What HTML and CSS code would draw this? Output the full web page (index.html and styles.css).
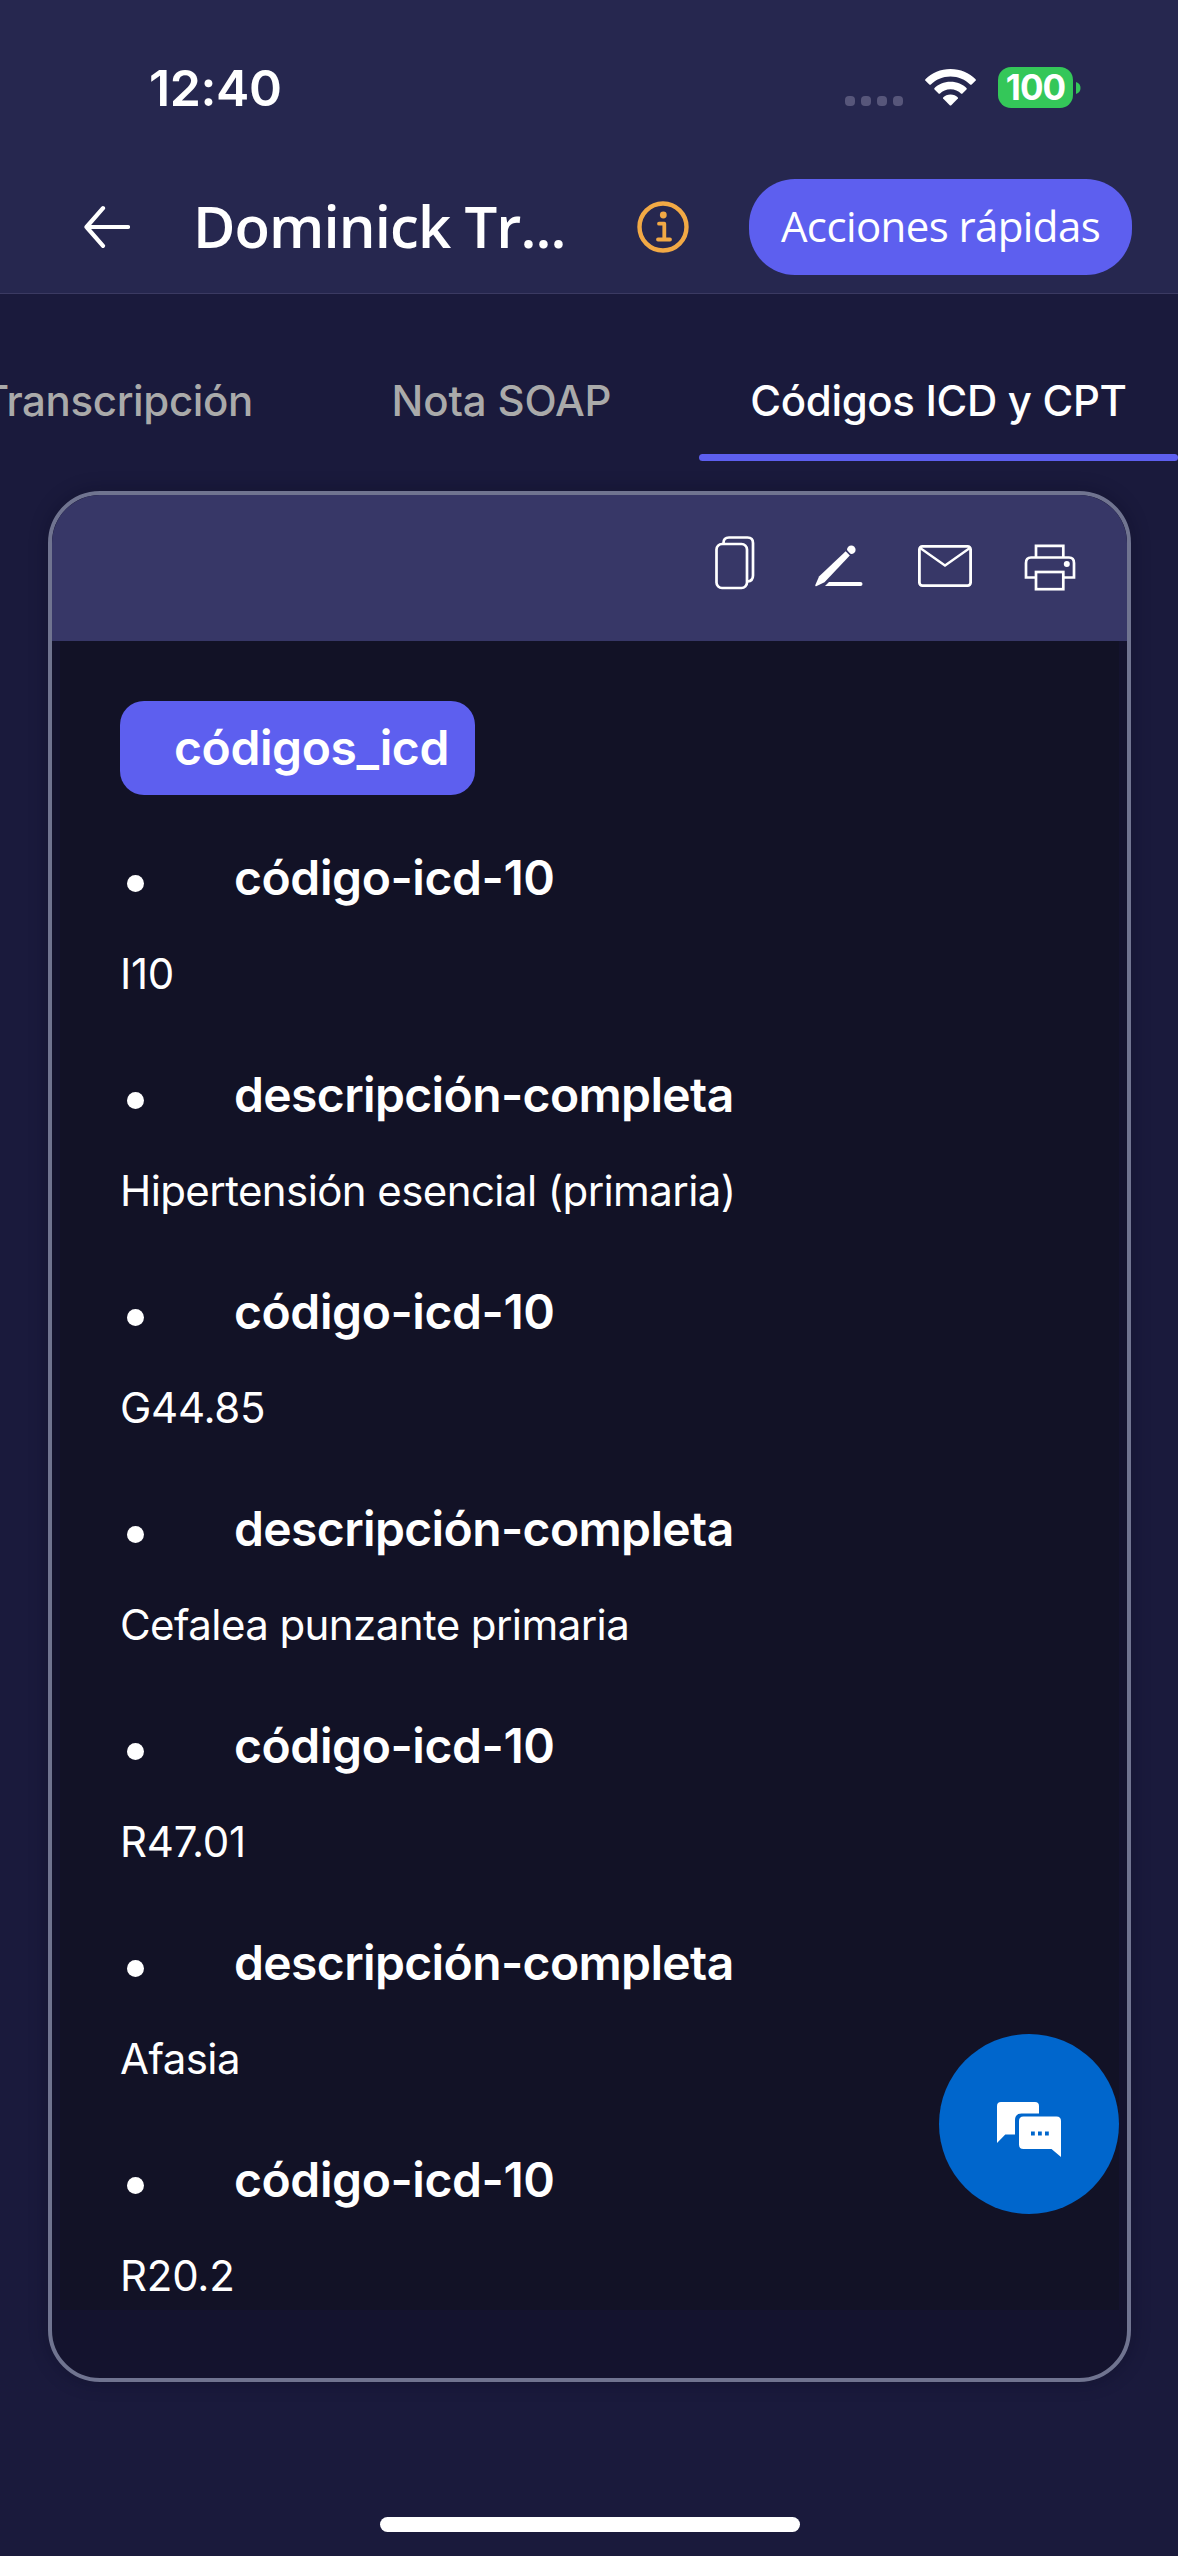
FILE: index.html
```html
<!DOCTYPE html>
<html lang="es">
<head>
<meta charset="utf-8">
<title>Códigos ICD y CPT</title>
<link rel="stylesheet" href="styles.css">
</head>
<body>
<div class="screen">
  <header class="top">
    <div class="status">
      <span class="time">12:40</span>
      <span class="signal"><i></i><i></i><i></i><i></i></span>
      <svg class="wifi" viewBox="0 0 51 37" width="51" height="37">
        <path fill="#fff" d="M25.5 0C35.4 0 44.4 3.800 50.600 10.200L51 11.200 46.400 15.800H45.400C40.200 10.500 33.200 7.500 25.500 7.500S10.800 10.500 5.600 15.800H4.600L0 11.200.4 10.200C6.600 3.800 15.600 0 25.500 0Z"/>
        <path fill="#fff" d="M25.500 12.800C32 12.800 37.800 15.300 41.700 19.300V20.300L37.200 24.800H36.200C33.400 22 29.700 20.300 25.500 20.300S17.600 22 14.800 24.800H13.800L9.300 20.300V19.300C13.200 15.300 19 12.800 25.500 12.800Z"/>
        <path fill="#fff" d="M25.500 25.500C28.500 25.500 31 26.600 32.900 28.500V29.500L26 36.500H25L18.100 29.500V28.500C20 26.600 22.500 25.500 25.500 25.500Z"/>
      </svg>
      <span class="battery"><span class="level">100</span><svg width="5" height="12" viewBox="0 0 5 12"><path fill="#34c759" d="M0 0C3 1 4.500 3 4.500 6S3 11 0 12Z"/></svg></span>
    </div>
    <div class="nav">
      <svg class="back" viewBox="0 0 46 44" width="46" height="44" fill="none" stroke="#fff" stroke-width="4.200" stroke-linecap="round" stroke-linejoin="round"><path d="M44 22H2.500M19 3.200L2.500 22L19 40.800"/></svg>
      <h1 class="title">Dominick Tr...</h1>
      <svg class="info" viewBox="0 0 52 52" width="52" height="52" fill="none" stroke="#f2a945">
        <circle cx="26" cy="26" r="23.500" stroke-width="4.400"/>
        <path d="M22 22.700H27.300V38.500M21 38.500H33" stroke-width="3.800" stroke-linecap="round" stroke-linejoin="round"/>
        <circle cx="26.300" cy="14" r="3.400" fill="#f2a945" stroke="none"/>
      </svg>
      <button class="quick"><span>Acciones rápidas</span></button>
    </div>
  </header>
  <nav class="tabs">
    <a class="tab tab-first"><span>Transcripción</span></a>
    <a class="tab tab-mid"><span>Nota SOAP</span></a>
    <a class="tab tab-on"><span>Códigos ICD y CPT</span></a>
  </nav>
  <main class="card">
    <div class="tools">
      <svg class="copy" viewBox="0 0 40 54" width="40" height="54" fill="none" stroke="#fff" stroke-width="2.700">
        <rect x="1.500" y="8" width="30.500" height="44" rx="5.500"/>
        <path d="M8.500 8V7Q8.500 1.500 14 1.500H32.500Q38 1.500 38 7V39.500Q38 45 32.500 45.500"/>
      </svg>
      <svg class="pen" viewBox="0 0 48 42" width="48" height="42" fill="#fff">
        <path d="M30.700 6.300L34.800 10.500L9.500 37.200L1.200 41.200Q0 41.500.3 40L4 31.500Z"/>
        <circle cx="36.300" cy="4.800" r="4.300"/>
        <path d="M31.200 5.200L35.200 9.400" stroke="#373767" stroke-width="1.200"/>
        <path d="M14 37H45.500Q47.500 37.200 47.500 39T45.500 41H10Z"/>
      </svg>
      <svg class="mail" viewBox="0 0 54 42" width="54" height="42" fill="none" stroke="#fff" stroke-width="2.800">
        <rect x="1.400" y="1.400" width="51.200" height="39.200" rx="3"/>
        <path d="M2.500 3.300L27 20.500L51.500 3.300" stroke-width="2.300"/>
      </svg>
      <svg class="print" viewBox="0 0 52 47" width="52" height="47" fill="none" stroke="#fff" stroke-width="2.700">
        <path d="M12 13V1.800H39.300V13"/>
        <path d="M12 33.500H2V19Q2 13.500 7 13.500H45Q50 13.500 50 19V33.500H39.300"/>
        <rect x="12" y="28" width="27.300" height="17.200"/>
        <circle cx="42.800" cy="20" r="3" fill="#fff" stroke="none"/>
      </svg>
    </div>
    <div class="content">
      <h2 class="badge"><span>códigos_icd</span></h2>
      <ul class="codes">
        <li class="code"><h3><span>código-icd-10</span></h3><p>I10</p></li>
        <li><h3><span>descripción-completa</span></h3><p>Hipertensión esencial (primaria)</p></li>
        <li class="code"><h3><span>código-icd-10</span></h3><p>G44.85</p></li>
        <li><h3><span>descripción-completa</span></h3><p>Cefalea punzante primaria</p></li>
        <li class="code"><h3><span>código-icd-10</span></h3><p>R47.01</p></li>
        <li><h3><span>descripción-completa</span></h3><p>Afasia</p></li>
        <li class="code"><h3><span>código-icd-10</span></h3><p>R20.2</p></li>
      </ul>
    </div>
  </main>
  <div class="home"></div>
  <button class="fab" aria-label="Chat">
    <svg viewBox="0 0 64 55" width="64" height="55">
      <path fill="#fff" d="M4 0H38Q42 0 42 4V11.500H24.500Q18 11.500 18 18V32.500H8.300L0 41V4Q0 0 4 0Z"/>
      <path fill="#fff" d="M26.500 14.500H59.500Q64 14.500 64 19V55L54.500 47H26.500Q22 47 22 42.500V19Q22 14.500 26.500 14.500Z"/>
      <path fill="#0066cc" d="M34 29.500h3.800v4H34zM41 29.500h3.800v4H41zM48 29.500h3.800v4H48z"/>
    </svg>
  </button>
</div>
</body>
</html>
```

FILE: styles.css
```css
* { box-sizing: border-box; }
body, h1, h2, h3, p, ul { margin: 0; padding: 0; }
body { background: #1a1a3c; color: #fff; font-family: Inter, "Liberation Sans", sans-serif; }
button { border: 0; padding: 0; color: inherit; font: inherit; }
svg { display: block; flex: none; }
span { white-space: nowrap; }

.screen { position: relative; width: 1178px; height: 2556px; overflow: hidden; display: flex; flex-direction: column; }

.top { height: 294px; flex: none; background: #26274f; border-bottom: 1px solid #3b3a62; display: flex; flex-direction: column; }
.status { height: 179px; padding: 0 97px 0 149px; display: flex; align-items: flex-start; }
.time { margin-top: 58px; line-height: 60px; font-size: 50px; font-weight: 600; width: 697px; letter-spacing: -0.4px; }
.signal { display: flex; gap: 6px; margin-top: 96px; width: 58px; }
.signal i { width: 10px; height: 10px; border-radius: 4px; background: #57567a; }
.wifi { margin: 69px 0 0 22px; }
.battery { margin: 67px 0 0 22px; display: flex; align-items: center; gap: 3px; }
.level { width: 75px; height: 41px; border-radius: 13px; background: #34c759; font-size: 35px; font-weight: 700; line-height: 41px; text-align: center; letter-spacing: -1px; }

.nav { height: 96px; display: flex; align-items: center; padding-left: 84px; }
.title { width: 442px; margin-left: 63px; padding-bottom: 3px; font-family: "Open Sans", "Noto Sans", sans-serif; font-size: 58px; font-weight: 600; line-height: 80px; letter-spacing: -0.9px; white-space: nowrap; }
.quick { margin-left: 60px; width: 383px; height: 96px; border-radius: 46px; background: #5d5fef; font-family: "Open Sans", "Noto Sans", sans-serif; font-size: 42px; line-height: 60px; letter-spacing: -0.6px; padding-bottom: 3px; }
.info { margin-left: 2px; }

.tabs { height: 167px; flex: none; display: flex; justify-content: flex-end; font-size: 42px; font-weight: 500; color: #aaa; line-height: 50px; letter-spacing: -0.35px; }
.tab { display: flex; padding-top: 82px; justify-content: center; flex: none; }
.tab-first { width: 322px; justify-content: flex-end; padding-right: 51px; }
.tab-mid { width: 395px; letter-spacing: -0.15px; }
.tab-on { width: 479px; color: #fff; position: relative; }
.tab-on::after { content: ""; position: absolute; left: 0; right: 0; bottom: 0; height: 7px; border-radius: 4px; background: #5d5fef; }

.card { margin: 30px 47px 0 48px; height: 1891px; flex: none; border: 4px solid #707490; border-radius: 52px; background: #14132e; overflow: hidden; box-shadow: 0 0 18px rgba(10, 10, 30, .35); }
.tools { height: 146px; background: #373767; display: flex; padding-left: 663px; }
.copy { margin-top: 41px; }
.pen { margin: 50px 0 0 60px; }
.mail { margin: 50px 0 0 55px; }
.print { margin: 49px 0 0 52px; }

.content { margin: 0 8px; height: 1669px; background: #121226; padding: 60px 0 0 60px; overflow: hidden; }
.badge { width: 355px; height: 94px; border-radius: 24px; background: #5d5fef; padding-left: 54px; font-size: 48px; font-weight: 600; line-height: 94px; letter-spacing: -0.4px; }
.codes { list-style: none; margin-top: 54px; }
.codes li { height: 217px; }
.codes h3 { display: flex; align-items: center; height: 58px; font-size: 48px; font-weight: 600; line-height: 58px; padding-left: 7px; letter-spacing: -0.63px; }
.codes h3::before { content: ""; width: 17px; height: 17px; margin: 10px 90px 0 0; border-radius: 50%; background: #fff; flex: none; }
.codes p { margin-top: 42px; font-size: 42px; line-height: 50px; letter-spacing: -0.58px; white-space: nowrap; }
.codes .code h3 { letter-spacing: -0.42px; }
.codes .code p { letter-spacing: -0.25px; }

.home { width: 420px; height: 15px; border-radius: 8px; background: #fff; margin: 135px 0 0 380px; flex: none; }
.fab { position: absolute; left: 939px; top: 2034px; width: 180px; height: 180px; border-radius: 50%; background: #0066cc; display: flex; align-items: center; justify-content: center; padding-top: 11px; }
```
